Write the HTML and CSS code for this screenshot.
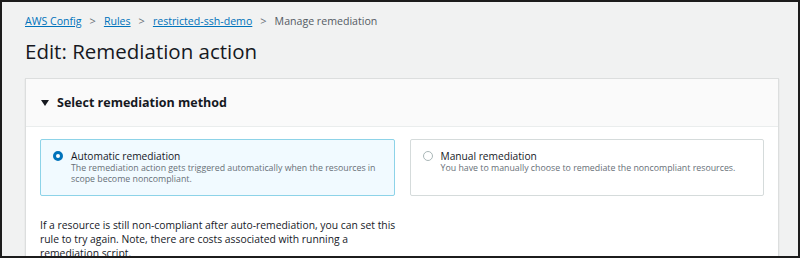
FILE: index.html
```html
<!DOCTYPE html>
<html lang="en">

<head>
    <meta charset="utf-8">
    <meta name="viewport" content="width=device-width, initial-scale=1.0">
    <title>Edit: Remediation action</title>
    <link rel="stylesheet" href="styles.css">
</head>

<body>
    <div class="frame">
        <div class="page">
            <nav class="crumbs">
                <a href="#">AWS Config</a>
                <span class="sep">&gt;</span>
                <a href="#">Rules</a>
                <span class="sep">&gt;</span>
                <a href="#">restricted-ssh-demo</a>
                <span class="sep">&gt;</span>
                <span class="current">Manage remediation</span>
            </nav>

            <h1>Edit: Remediation action</h1>

            <section class="panel">
                <header class="panel_head">
                    <span class="caret"></span>
                    <h2>Select remediation method</h2>
                </header>

                <div class="panel_body">
                    <div class="choices">
                        <label class="choice valgt">
                            <span class="radio"></span>
                            <span class="choice_text">
                                <span class="choice_title">Automatic remediation</span>
                                <span class="choice_desc">The remediation action gets triggered automatically when the resources in scope become noncompliant.</span>
                            </span>
                        </label>
                        <label class="choice">
                            <span class="radio"></span>
                            <span class="choice_text">
                                <span class="choice_title">Manual remediation</span>
                                <span class="choice_desc">You have to manually choose to remediate the noncompliant resources.</span>
                            </span>
                        </label>
                    </div>

                    <p class="note">If a resource is still non-compliant after auto-remediation, you can set this rule to try again. Note, there are costs associated with running a remediation script.</p>
                </div>
            </section>
        </div>
    </div>
</body>

</html>
```

FILE: styles.css
```css
* {
    box-sizing: border-box;
}

body {
    margin: 0;
    font-family: 'Open Sans', 'Noto Sans', sans-serif;
    color: #16191f;
}

.frame {
    width: 800px;
    height: 258px;
    overflow: hidden;
    border: 2px solid #1c1c1c;
    background: #f1f2f2;
}

.page {
    padding: 11px 19px 0 23px;
}

.crumbs {
    font-size: 10.6px;
    line-height: 16px;
    display: flex;
    align-items: center;
    gap: 8px;
}

.crumbs a {
    color: #0073bb;
    text-decoration: underline;
}

.crumbs .sep {
    color: #687078;
    font-size: 11px;
}

.crumbs .current {
    color: #545b64;
}

h1 {
    font-size: 20.5px;
    font-weight: 400;
    line-height: 26px;
    margin: 9px 0 0;
}

.panel {
    margin-top: 14px;
    background: #fff;
    border: 1px solid #dcdede;
    box-shadow: 0 1px 1px rgba(0, 28, 36, 0.15);
}

.panel_head {
    height: 48px;
    background: #fafafa;
    border-bottom: 1px solid #eaeded;
    display: flex;
    align-items: center;
    padding-left: 15px;
    gap: 8px;
}

.caret {
    width: 0;
    height: 0;
    border-left: 4px solid transparent;
    border-right: 4px solid transparent;
    border-top: 6px solid #16191f;
}

h2 {
    margin: 0;
    font-size: 12.5px;
    font-weight: 700;
}

.panel_body {
    padding: 12px 14px 0;
}

.choices {
    display: grid;
    grid-template-columns: 1fr 1fr;
    gap: 15px;
}

.choice {
    height: 57px;
    border: 1px solid #d5dbdb;
    border-radius: 2px;
    display: flex;
    align-items: flex-start;
    padding: 9px 12px 0 12px;
    gap: 8px;
}

.choice.valgt {
    background: #f1faff;
    border-color: #8dd3e8;
}

.radio {
    flex: none;
    width: 10px;
    height: 10px;
    margin-top: 2px;
    border-radius: 50%;
    border: 1px solid #aab7b8;
    background: #fff;
}

.valgt .radio {
    border: 3px solid #0073bb;
}

.choice_text {
    display: flex;
    flex-direction: column;
}

.choice_title {
    font-size: 10.2px;
    line-height: 14px;
}

.choice_desc {
    font-size: 8.8px;
    line-height: 11px;
    color: #687078;
}

.note {
    margin: 22px 0 0;
    width: 365px;
    font-size: 10.35px;
    line-height: 14px;
}
```
